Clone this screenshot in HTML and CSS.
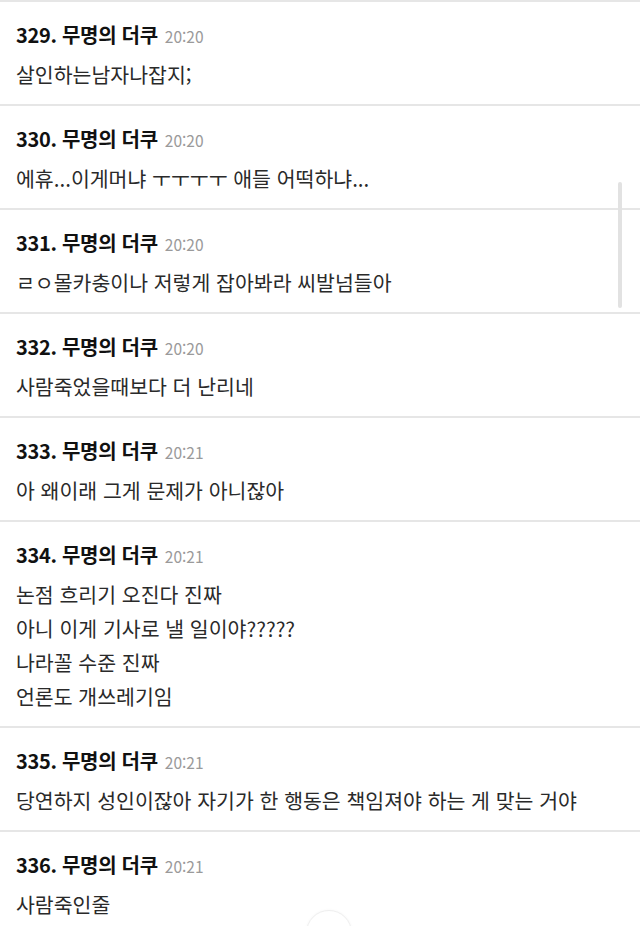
FILE: index.html
```html
<!DOCTYPE html>
<html lang="ko">
<head>
<meta charset="utf-8">
<link rel="stylesheet" href="styles.css">
</head>
<body>
<div class="list">
  <div class="row">
    <div class="head"><span class="name">329. 무명의 더쿠</span><span class="time">20:20</span></div>
    <div class="body"><p>살인하는남자나잡지;</p></div>
  </div>
  <div class="row">
    <div class="head"><span class="name">330. 무명의 더쿠</span><span class="time">20:20</span></div>
    <div class="body"><p>에휴...이게머냐 ㅜㅜㅜㅜ 애들 어떡하냐...</p></div>
  </div>
  <div class="row">
    <div class="head"><span class="name">331. 무명의 더쿠</span><span class="time">20:20</span></div>
    <div class="body"><p>ㄹㅇ몰카충이나 저렇게 잡아봐라 씨발넘들아</p></div>
  </div>
  <div class="row">
    <div class="head"><span class="name">332. 무명의 더쿠</span><span class="time">20:20</span></div>
    <div class="body"><p>사람죽었을때보다 더 난리네</p></div>
  </div>
  <div class="row">
    <div class="head"><span class="name">333. 무명의 더쿠</span><span class="time">20:21</span></div>
    <div class="body"><p>아 왜이래 그게 문제가 아니잖아</p></div>
  </div>
  <div class="row">
    <div class="head"><span class="name">334. 무명의 더쿠</span><span class="time">20:21</span></div>
    <div class="body"><p>논점 흐리기 오진다 진짜</p><p>아니 이게 기사로 낼 일이야?????</p><p>나라꼴 수준 진짜</p><p>언론도 개쓰레기임</p></div>
  </div>
  <div class="row">
    <div class="head"><span class="name">335. 무명의 더쿠</span><span class="time">20:21</span></div>
    <div class="body"><p>당연하지 성인이잖아 자기가 한 행동은 책임져야 하는 게 맞는 거야</p></div>
  </div>
  <div class="row">
    <div class="head"><span class="name">336. 무명의 더쿠</span><span class="time">20:21</span></div>
    <div class="body"><p>사람죽인줄</p></div>
  </div>
</div>
<div class="scrollbar"></div>
<div class="fab"></div>
</body>
</html>
```
FILE: styles.css
```css
html, body {
  margin: 0;
  padding: 0;
  background: #fff;
  height: 926px;
  overflow: hidden;
}
body {
  font-family: "Noto Sans CJK KR", "Noto Sans", sans-serif;
  color: #222;
  position: relative;
}
.list {
  display: flex;
  flex-direction: column;
}
.row {
  border-top: 2px solid #e6e6e6;
  padding: 18px 16px 13px;
}
.head {
  display: flex;
  align-items: baseline;
  height: 30px;
  line-height: 30px;
}
.name {
  font-size: 20px;
  font-weight: 700;
  color: #111;
  letter-spacing: -0.3px;
}
.time {
  font-size: 15.5px;
  color: #9a9a9a;
  margin-left: 7px;
}
.body {
  margin-top: 7px;
}
.body p {
  margin: 0;
  font-size: 20.5px;
  line-height: 34px;
  color: #2a2a2a;
}
.scrollbar {
  position: absolute;
  left: 618px;
  top: 182px;
  width: 4px;
  height: 126px;
  border-radius: 2px;
  background: #e2e2e2;
}
.fab {
  position: absolute;
  left: 306px;
  top: 910px;
  width: 44px;
  height: 44px;
  border-radius: 50%;
  border: 1px solid #efefef;
  background: #fff;
  box-shadow: 0 0 3px rgba(0,0,0,0.04);
}
```
